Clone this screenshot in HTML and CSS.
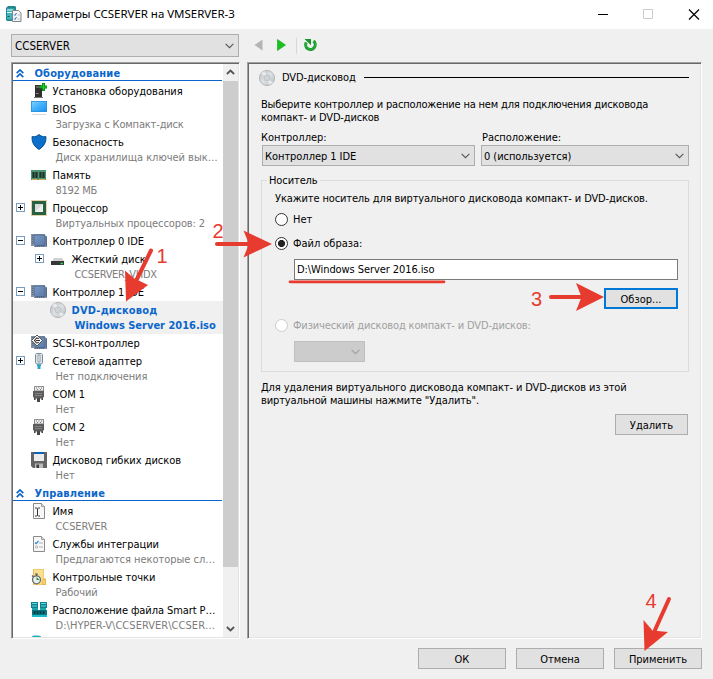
FILE: index.html
```
<!DOCTYPE html>
<html lang="ru">
<head>
<meta charset="utf-8">
<title>Параметры CCSERVER на VMSERVER-3</title>
<link rel="stylesheet" href="styles.css">
</head>
<body>
<svg class="defs" width="0" height="0">
  <defs>
    <linearGradient id="g-disc" x1="0" y1="0" x2="1" y2="1"><stop offset="0" stop-color="#b9bfc2"/><stop offset=".5" stop-color="#dde1e3"/><stop offset="1" stop-color="#b4babd"/></linearGradient>
    <linearGradient id="g-screen" x1="0" y1="0" x2="1" y2="1"><stop offset="0" stop-color="#7fd0ff"/><stop offset=".5" stop-color="#3fb0fb"/><stop offset="1" stop-color="#1c93ee"/></linearGradient>
    <linearGradient id="g-chip" x1="0" y1="0" x2="1" y2="1"><stop offset="0" stop-color="#7d99c2"/><stop offset="1" stop-color="#587aab"/></linearGradient>
  </defs>
  <symbol id="disc" viewBox="0 0 16 16"><circle cx="8" cy="8" r="7.6" fill="url(#g-disc)" stroke="#a9afb2" stroke-width=".8"/><path d="M8 8 2 3.500A7 7 0 0 1 6 1.200zM8 8l6 4.500A7 7 0 0 1 10 14.800z" fill="#f3f5f6" opacity=".7"/><circle cx="8" cy="8" r="3" fill="#d9dddf" stroke="#b7bcbf" stroke-width=".8"/><circle cx="8" cy="8" r="1.300" fill="#f6f6f6" stroke="#a3a9ac" stroke-width=".6"/></symbol>
  <symbol id="chip" viewBox="0 0 16 16"><path d="M0 1h14v2h2v11H3v-1H0z" fill="#8593a5"/><path d="M1.500 2v10" stroke="#5c6c82" stroke-width="1" stroke-dasharray="1 1"/><path d="M3 2h11v10.500H5l-2-2z" fill="url(#g-chip)" stroke="#47648f" stroke-width=".8"/><path d="M4.500 12.500V14M6.500 12.500V14M8.500 12.500V14M10.500 12.500V14M12.500 12.500V14M15.400 4v9" stroke="#51657f" stroke-width=".9"/></symbol>
  <symbol id="com" viewBox="0 0 16 16"><path d="M3.500.400h9V5h-9z" fill="#ededed" stroke="#6d6d6d" stroke-width=".8"/><path d="M5 2h1M7.500 2h1M10 2h1M6 3.500h1M9 3.500h1" stroke="#777" stroke-width="1"/><path d="M2 5h11v6l-2 1.500H4L2 11z" fill="#5d5d5d"/><path d="M4 7.500h7M4 9.500h7" stroke="#8b8b8b" stroke-width=".8"/><path d="M3 12h1.600v2H3zM10.400 12H12v2h-1.600zM6 12h3v4H6z" fill="#484848"/></symbol>
  <symbol id="page" viewBox="0 0 16 16"><path d="M2.500.500h8l3 3v12h-11z" fill="#f7f7f7" stroke="#8b8b8b"/><path d="M10.500.500v3h3" fill="#ddd" stroke="#8b8b8b" stroke-width=".8"/></symbol>
  <symbol id="chev" viewBox="0 0 10 6"><path d="m.700.700 4.300 4.200L9.300.700" fill="none" stroke="currentColor" stroke-width="1.200"/></symbol>
  <symbol id="chev-bold" viewBox="0 0 10 6"><path d="m1 .800 4 3.800L9 .800" fill="none" stroke="currentColor" stroke-width="2"/></symbol>
  <symbol id="fold" viewBox="0 0 8 9"><path d="M.700 4.200 4 1l3.300 3.200M.700 8.200 4 5l3.300 3.200" fill="none" stroke="#0a66cc" stroke-width="1.700"/></symbol>
  <symbol id="servers" viewBox="0 0 16 16"><path d="M0 0h7v6H0zM9 0h7v6H9z" fill="#11808c"/><path d="M1 1.500h5M10 1.500h5M1 4h5M10 4h5" stroke="#59dbe6" stroke-width="1"/><path d="M1 6h6v2H1zM9 6h6v2H9z" fill="#1aa5b1"/><path d="M1 8h15v5H1z" fill="#0c7683"/><path d="M3.500 9v3M6.500 9v3M9.500 9v3M12.500 9v3" stroke="#043f4a" stroke-width="1.800"/><path d="M1 14h15" stroke="#16bcca" stroke-width="2"/></symbol>
</svg>

<header class="titlebar">
  <svg class="app-icon" viewBox="0 0 16 16"><path d="M0 2 2 0h7l1 1v14H1l-1-1z" fill="#23868e"/><path d="M1 2.500h7v11H1z" fill="#43b3ba"/><path d="M1 4h6M1 6.500h6" stroke="#d7f5f6"/><path d="M1.500 10.500h2" stroke="#0b5a61"/><path d="M6.500 4.500h6l2.500 2.500v8.500H6.500z" fill="#f5f5f5" stroke="#7f8587"/><path d="m8 8.500 1 1 1.500-2.500M8 12.500l1 1 1.500-2.500" stroke="#1c78c8" fill="none"/><path d="M11.500 9H14M11.500 13H14" stroke="#a8a8a8" stroke-width=".8"/></svg>
  <h1>Параметры CCSERVER на VMSERVER-3</h1>
  <svg class="win-btns" viewBox="0 0 104 12"><path d="M0 6.500h10" stroke="#000"/><path d="M45.500 1.500h9v9h-9z" fill="none" stroke="#ccc"/><path d="m91 1.500 10 10m0-10-10 10" stroke="#000" stroke-width="1.200"/></svg>
</header>

<div class="toolbar">
  <div class="combo vm-combo"><span>CCSERVER</span><svg class="chev"><use href="#chev"/></svg></div>
  <svg class="nav" viewBox="0 0 64 18"><path d="M8.500 3.500v11L.500 9z" fill="#b4b4b4"/><path d="M23.500 3.500v11l8-5.500z" fill="#17c41d" stroke="#159b1b" stroke-width=".6"/><path d="M43 2v16" stroke="#c2c2c2"/><path d="M44 2v16" stroke="#fff"/><path d="M52.200 6.500A4.800 4.800 0 1 0 59.500 5" fill="none" stroke="#16962a" stroke-width="3"/><path d="M50.500 3h6.500v6.200z" fill="#16962a"/><path d="M52.200 6.500A4.800 4.800 0 1 0 59.500 5" fill="none" stroke="#2dbb3f" stroke-width="1"/></svg>
</div>

<div class="panes">
  <nav class="tree sunken">
    <div class="list">
      <div class="group"><svg class="fold"><use href="#fold"/></svg><span>Оборудование</span></div>
      <div class="item"><svg class="ic" viewBox="0 0 16 16"><path d="M4 2h6l1 1v12H4z" fill="#303030"/><path d="M3 14.500h9" stroke="#777"/><path d="M5 4h4M5 10.500h2.500" stroke="#929292"/><path d="M12.500 0v8M8.500 4h8" stroke="#0b8f18" stroke-width="3"/><path d="M12.500.800v6.400M9.200 4H16" stroke="#22cf2f" stroke-width="1.200"/></svg><div><p>Установка оборудования</p></div></div>
      <div class="item"><svg class="ic" viewBox="0 0 16 16"><path d="M0 0h16v11H0z" fill="#2a90dc"/><path d="M.800.800h14.400v9.400H.800z" fill="url(#g-screen)"/><path d="M1 13.500h14" stroke="#d4dade"/></svg><div><p>BIOS</p><small class="s1">Загрузка с Компакт-диск</small></div></div>
      <div class="item"><svg class="ic" viewBox="0 0 16 16"><path d="M8 .500 10 2q2.500 1 5 .700Q15.500 11 8 15.500.500 11 1 2.700 3.500 3 6 2z" fill="#0b70cb" stroke="#07518f"/></svg><div><p>Безопасность</p><small>Диск хранилища ключей вык…</small></div></div>
      <div class="item"><svg class="ic" viewBox="0 0 16 16"><path d="M0 3h15v10H0z" fill="#4e9672"/><path d="M2.500 5v6M5.500 5v6M9.500 5v6M12.500 5v6" stroke="#20352b" stroke-width="2.300"/><path d="M1 12.500h5M8 12.500h6" stroke="#e2a353" stroke-width="1.200"/></svg><div><p>Память</p><small class="s3">8192 МБ</small></div></div>
      <div class="item"><i class="box plus"></i><svg class="ic" viewBox="0 0 16 16"><path d="M.500.500h15v15H.500z" fill="none" stroke="#c9a54a" stroke-dasharray="1 1"/><path d="M1 1h14v14H1z" fill="#286044"/><path d="M4 4h8v8H4z" fill="#d6dad8"/><path d="M4 12 12 4v8z" fill="#efefef"/></svg><div><p>Процессор</p><small class="s2">Виртуальных процессоров: 2</small></div></div>
      <div class="item"><i class="box"></i><svg class="ic"><use href="#chip"/></svg><div><p>Контроллер 0 IDE</p></div></div>
      <div class="item child"><i class="box plus"></i><svg class="ic" viewBox="0 0 16 16"><path d="M4 7h8l2.500 4h-13z" fill="#d0d0d0"/><path d="M1 10h13v4H1z" fill="#373737"/><path d="M10.500 12.500H13" stroke="#24dc55" stroke-width="1.500"/></svg><div><p>Жесткий диск</p><small class="s3">CCSERVER_VHDX</small></div></div>
      <div class="item"><i class="box"></i><svg class="ic"><use href="#chip"/></svg><div><p>Контроллер 1 IDE</p></div></div>
      <div class="item child selected"><svg class="ic"><use href="#disc"/></svg><div><p>DVD-дисковод</p><small>Windows Server 2016.iso</small></div></div>
      <div class="item"><svg class="ic" viewBox="0 0 16 16"><use href="#chip"/><path d="M6 0 11.500 5.500 6 11 .500 5.500z" fill="#f4f4f4" stroke="#555"/><path d="M8 3.500 5.500 3 3.500 5.500l2 2.500L8 7.500M5 5.500h4" fill="none" stroke="#333" stroke-width="1.100"/></svg><div><p>SCSI-контроллер</p></div></div>
      <div class="item"><i class="box plus"></i><svg class="ic" viewBox="0 0 16 16"><path d="M4.500 1.500 5.500.500h5l1 1v8l-1 1.500h-5L4.500 9.500z" fill="#dfe5ea" stroke="#7b8b98"/><path d="M7 2v7h2V2z" fill="#fff" stroke="#8e9ca7"/><path d="M6 11h4v2H6z" fill="#4ba9cc"/><path d="M6.500 12h3v4h-3z" fill="#2c9fca"/></svg><div><p>Сетевой адаптер</p><small class="s2">Нет подключения</small></div></div>
      <div class="item"><svg class="ic"><use href="#com"/></svg><div><p>COM 1</p><small>Нет</small></div></div>
      <div class="item"><svg class="ic"><use href="#com"/></svg><div><p>COM 2</p><small>Нет</small></div></div>
      <div class="item"><svg class="ic" viewBox="0 0 16 16"><path d="M0 0h16v16H2l-2-2z" fill="#646464"/><path d="M3 0h10v9H3z" fill="#ececec"/><path d="M3 0h10v2H3z" fill="#0c62b4"/><path d="M4 11.500h8V16H4z" fill="#b9b9b9"/><path d="M5.500 12.500H8V16H5.500z" fill="#3c3c3c"/></svg><div><p>Дисковод гибких дисков</p><small>Нет</small></div></div>
      <div class="group"><svg class="fold"><use href="#fold"/></svg><span>Управление</span></div>
      <div class="item"><svg class="ic" viewBox="0 0 16 16"><use href="#page"/><path d="M4 5h1.500l1 .700 1-.700H9M6.500 5.500v7M4 13h1.500l1-.700 1 .700H9" fill="none" stroke="#333"/></svg><div><p>Имя</p><small class="s2">CCSERVER</small></div></div>
      <div class="item"><svg class="ic" viewBox="0 0 16 16"><use href="#page"/><path d="m4 6.500 1.200 1.200L7.500 5" fill="none" stroke="#2c8ddb" stroke-width="1.200"/><path d="M8 7h4M8 11h4" stroke="#b0b0b0"/><path d="M4.500 10h2v2h-2z" fill="none" stroke="#b0b0b0" stroke-width=".8"/></svg><div><p>Службы интеграции</p><small>Предлагаются некоторые сл…</small></div></div>
      <div class="item"><svg class="ic" viewBox="0 0 16 16"><path d="M2 0h11v9l2 1v6H2z" fill="#e6bb50"/><path d="M3 .500h9.500V15.500H3z" fill="#fadf8e"/><path d="M12 10h2.500v5.500H11z" fill="#f6cf68" stroke="#dfb347" stroke-width=".7"/><circle cx="5.500" cy="10.800" r="4" fill="#eceeef" stroke="#676c70" stroke-width="1.300"/><path d="M4 5h3M5.500 5v2M1 6.500 2.500 8" stroke="#5b6064" stroke-width="1.200"/><path d="M5.500 11V8l3 3z" fill="#23963b"/></svg><div><p>Контрольные точки</p><small class="s2">Рабочий</small></div></div>
      <div class="item"><svg class="ic"><use href="#servers"/></svg><div><p class="t2">Расположение файла Smart P…</p><small class="s5">D:\HYPER-V\CCSERVER\CCSER…</small></div></div>
      <div class="item"><svg class="ic" viewBox="0 0 16 16"><path d="M1 2q0-1.500 2-1.500h4Q10 .500 10 2v3H1z" fill="#1fb0bb"/></svg></div>
    </div>
    <div class="scroll">
      <svg class="arrow up"><use href="#chev-bold"/></svg>
      <div class="thumb"></div>
      <svg class="arrow"><use href="#chev-bold"/></svg>
    </div>
  </nav>

  <main class="detail sunken">
    <div class="heading"><svg class="ic"><use href="#disc"/></svg><h2>DVD-дисковод</h2><hr></div>
    <p class="intro">Выберите контроллер и расположение на нем для подключения дисковода<br>компакт- и DVD-дисков</p>
    <div class="pickers">
      <div><label>Контроллер:</label><div class="combo"><span>Контроллер 1 IDE</span><svg class="chev"><use href="#chev"/></svg></div></div>
      <div><label>Расположение:</label><div class="combo"><span>0 (используется)</span><svg class="chev"><use href="#chev"/></svg></div></div>
    </div>
    <section class="media">
      <h3><span>Носитель</span></h3>
      <p class="hint">Укажите носитель для виртуального дисковода компакт- и DVD-дисков.</p>
      <div class="radio r1"><i></i>Нет</div>
      <div class="radio r2 on"><i></i>Файл образа:</div>
      <div class="path">D:\Windows Server 2016.iso</div>
      <div class="btn browse">Обзор...</div>
      <div class="radio off"><i></i>Физический дисковод компакт- и DVD-дисков:</div>
      <div class="combo disabled"><svg class="chev"><use href="#chev"/></svg></div>
    </section>
    <p class="remove">Для удаления виртуального дисковода компакт- и DVD-дисков из этой<br>виртуальной машины нажмите "Удалить".</p>
    <div class="btn delete">Удалить</div>
  </main>
</div>

<footer class="actions">
  <div class="btn">ОК</div>
  <div class="btn">Отмена</div>
  <div class="btn">Применить</div>
</footer>

<svg class="marks" viewBox="0 0 713 679">
  <g fill="none" stroke="#e83b2f" stroke-linecap="round">
    <path d="M151 250.500 137 279" stroke-width="4"/>
    <path d="M217 244h34" stroke-width="4"/>
    <path d="M551 297h32" stroke-width="4"/>
    <path d="m669 599-14 31" stroke-width="4"/>
    <path d="M290 281.800h154" stroke-width="2.800"/>
  </g>
  <g fill="#e83b2f">
    <path d="m126 301.500-1-31 8.500 7.500 14.500 7z"/>
    <path d="m272 244-28.500 13.500L249 244l-5.500-13.500z"/>
    <path d="m604 297-28 14 5.500-14-5.500-14z"/>
    <path d="M644.500 651 643.500 620l9 10.500 15.500 1.500z"/>
    <text x="156.500" y="262.500">1</text>
    <text x="212.500" y="238">2</text>
    <text x="531" y="305.500">3</text>
    <text x="645.500" y="608">4</text>
  </g>
</svg>
</body>
</html>
```
FILE: styles.css
```
* { box-sizing: border-box; }
body {
  margin: 0;
  width: 713px;
  height: 679px;
  overflow: hidden;
  position: relative;
  background: #f0f0f0;
  color: #000;
  font: 11px/13px "DejaVu Sans Condensed", "DejaVu Sans", sans-serif;
  white-space: nowrap;
}
h1, h2, h3, p { margin: 0; font: inherit; }
svg { display: block; flex: none; }
.defs { position: absolute; }

.titlebar { display: flex; align-items: center; height: 29px; background: #fff; padding: 0 12px 2px 6px; }
.app-icon { width: 16px; height: 16px; }
.titlebar h1 { font: 11.5px/16px "Noto Sans", sans-serif; margin-left: 4.5px; letter-spacing: -.03px; }
.win-btns { width: 104px; height: 12px; margin-left: auto; margin-right: -1px; }

.toolbar { display: flex; height: 33px; padding: 5px 0 0 11px; }
.combo {
  display: flex; align-items: center; justify-content: space-between;
  height: 21px; padding: 1px 4px 0 2px;
  border: 1px solid #adadad; background: #e1e1e1; color: #000;
}
.chev { width: 9px; height: 6px; color: #555; }
.vm-combo { width: 228px; height: 23px; padding-left: 3px; font-size: 11.5px; }
.nav { width: 64px; height: 18px; margin: 2px 0 0 14.5px; }

.panes { display: flex; gap: 7px; padding-left: 11px; }
.sunken {
  height: 577px; border: 1px solid; border-color: #a0a0a0 #fff #fff #a0a0a0;
  box-shadow: inset 1px 1px #696969, inset -1px -1px #e3e3e3;
}
.tree { width: 229px; padding: 1px; display: flex; background: #fff; }
.list { width: 210px; height: 573px; overflow: hidden; }
.group {
  display: flex; align-items: center; height: 17px; margin-bottom: 1px; padding: 2px 0 0 3px;
  width: 209px; border-bottom: 1px solid #0a66cc; color: #0a66cc; font-weight: bold; letter-spacing: .16px;
}
.fold { width: 8px; height: 9px; margin-right: 10.5px; }
.item { display: flex; align-items: flex-start; position: relative; padding-left: 18px; letter-spacing: -.03px; }
.ic { width: 16px; height: 16px; margin-top: 1px; }
.item > div { padding-left: 5.5px; }
.item p { height: 18px; padding-top: 1px; line-height: 18px; }
.item small { display: block; font-size: 11px; line-height: 13px; height: 15px; color: #7c7c7c; padding-left: 3px; }
.item .s1 { letter-spacing: -.16px; }
.item .s2 { letter-spacing: -.1px; }
.item .s3 { letter-spacing: -.3px; }
.item .s5 { letter-spacing: .04px; }
.item .t2 { letter-spacing: -.08px; }
.box { position: absolute; left: 3px; top: 4px; width: 9px; height: 9px; border: 1px solid #7a9cc0; background: linear-gradient(#000, #000) center/5px 1px no-repeat #fff; }
.plus { background: linear-gradient(#000, #000) center/5px 1px no-repeat, linear-gradient(#000, #000) center/1px 5px no-repeat #fff; }
.child { padding-left: 37px; width: 210px; }
.child .box { left: 22px; }
.item.selected, .selected small { color: #0a66cc; font-weight: bold; }
.item.selected { background: #f0f0f0; letter-spacing: .18px; }
.selected small { letter-spacing: 0; }

.scroll { width: 15px; height: 573px; background: #f0f0f0; display: flex; flex-direction: column; align-items: center; }
.thumb { width: 15px; height: 486px; margin-top: 6px; background: #cdcdcd; }
.arrow { width: 9px; height: 6px; margin-top: auto; margin-bottom: 5px; color: #555; }
.arrow.up { margin: 5px 0 0; transform: rotate(180deg); }

.detail { width: 455px; padding: 6px 12px 0 11px; letter-spacing: -.17px; }
.heading { display: flex; align-items: center; height: 17px; }
.heading .ic { margin-top: 0; }
.heading h2 { margin-left: 7px; letter-spacing: -.1px; }
.heading hr { flex: 1; height: 1px; border: 0; margin: 0 0 0 8px; background: #000; }
.intro { margin: 12px 0 0 2px; letter-spacing: -.18px; }
.pickers { display: flex; gap: 6px; margin: 7px 0 0 3px; }
.pickers > div:first-child { width: 213px; }
.pickers > div:last-child { width: 208px; }
.pickers label { display: block; height: 14px; margin-left: -1px; letter-spacing: -.05px; }
.pickers > div:last-child label { margin-left: 1px; }
.pickers .combo { letter-spacing: -.05px; }

.media { width: 428px; height: 192px; margin: 14px 0 0 2px; border: 1px solid #dcdcdc; padding-left: 13px; }
.media h3 { height: 11px; margin: -7px 0 0 -8px; }
.media h3 span { background: #f0f0f0; padding: 0 2px; letter-spacing: -.1px; }
.hint { margin-top: 7px; letter-spacing: -.13px; }
.radio { display: flex; align-items: center; height: 13px; letter-spacing: -.03px; }
.radio i { width: 13px; height: 13px; border: 1px solid #333; border-radius: 50%; background: #fff; margin-right: 5px; }
.r1 { margin-top: 8px; }
.r2 { margin-top: 11px; }
.on i { background: radial-gradient(circle, #222 3.2px, #fff 3.9px); }
.off { margin-top: 10px; color: #a0a0a0; letter-spacing: -.15px; }
.off i { border-color: #ccc; }
.path { width: 384px; height: 21px; margin: 9px 0 0 19px; border: 1px solid #7a7a7a; background: #fff; padding-left: 2px; line-height: 19px; letter-spacing: -.08px; }
.btn { border: 1px solid #adadad; background: #e1e1e1; height: 21px; line-height: 21px; text-align: center; letter-spacing: 0; }
.browse { width: 74px; margin: 8px 0 0 329px; border: 2px solid #0078d7; line-height: 19px; }
.disabled { width: 71px; margin: 9px 0 0 19px; background: #ccc; border-color: #bfbfbf; }
.disabled .chev { margin-left: auto; color: #a0a0a0; }
.remove { margin: 9px 0 0 2px; letter-spacing: -.13px; }
.delete { width: 73px; margin: 7px 0 0 356px; }

.actions { display: flex; justify-content: flex-end; gap: 10px; padding: 9px 11px 0 0; }
.actions .btn { width: 88px; }

.marks { position: absolute; left: 0; top: 0; width: 713px; height: 679px; pointer-events: none; font: 20px "Liberation Sans", sans-serif; }
```
